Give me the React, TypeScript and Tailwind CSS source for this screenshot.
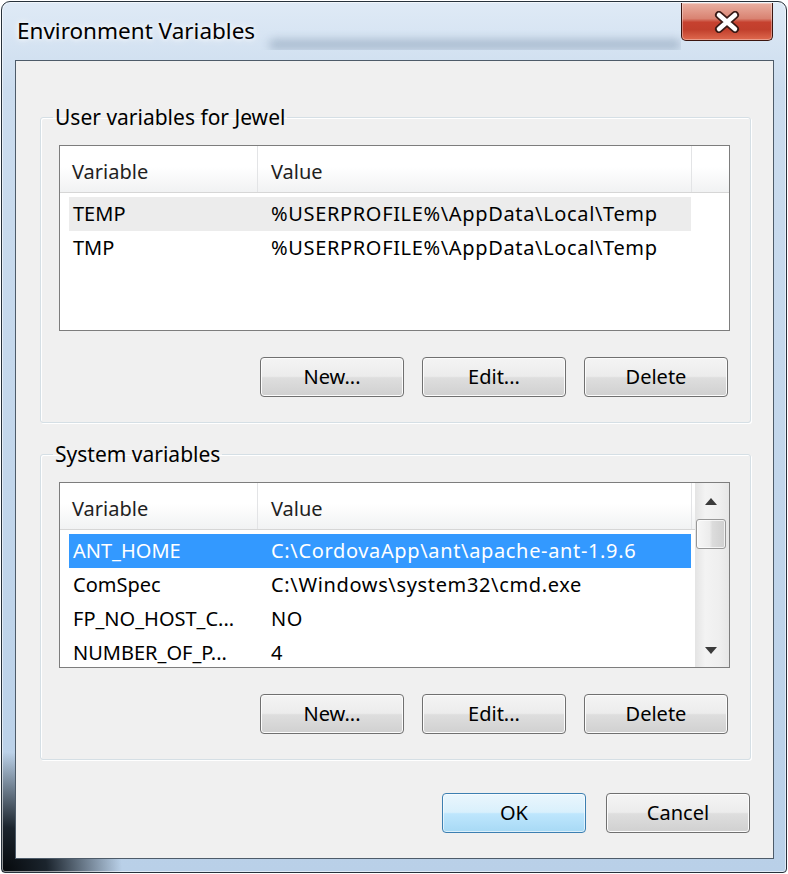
type Row = { name: string; value: string; state?: "hover" | "selected" };

const userVars: Row[] = [
  { name: "TEMP", value: "%USERPROFILE%\\AppData\\Local\\Temp", state: "hover" },
  { name: "TMP", value: "%USERPROFILE%\\AppData\\Local\\Temp" },
];

const systemVars: Row[] = [
  { name: "ANT_HOME", value: "C:\\CordovaApp\\ant\\apache-ant-1.9.6", state: "selected" },
  { name: "ComSpec", value: "C:\\Windows\\system32\\cmd.exe" },
  { name: "FP_NO_HOST_C...", value: "NO" },
  { name: "NUMBER_OF_P...", value: "4" },
];

function Win7Button({ label, primary }: { label: string; primary?: boolean }) {
  return (
    <button
      className={`h-[40px] w-[144px] rounded-[4px] border text-[20px] leading-none text-black ${
        primary
          ? "border-[#3c7fb1] bg-[linear-gradient(to_bottom,#eaf6fd_0%,#d9f0fc_48%,#bee6fd_52%,#a7d9f5_100%)] shadow-[inset_0_0_0_1px_rgba(255,255,255,0.6)]"
          : "border-[#707070] bg-[linear-gradient(to_bottom,#f4f4f4_0%,#ececec_48%,#dedede_52%,#d0d0d0_100%)] shadow-[inset_0_0_0_1px_#fcfcfc]"
      }`}
    >
      {label}
    </button>
  );
}

function ScrollBar() {
  return (
    <div className="flex w-[34px] shrink-0 flex-col bg-[linear-gradient(to_right,#e4e4e4_0%,#f3f3f3_30%,#efefef_70%,#e6e6e6_100%)] pr-[3px]">
      <div className="flex h-[36px] items-center justify-center">
        <svg width="12" height="7" viewBox="0 0 12 7">
          <path d="M0 7 L6 0 L12 7 Z" fill="#3b3b3b" />
        </svg>
      </div>
      <div className="ml-[1px] h-[30px] rounded-[3px] border border-[#979797] bg-[linear-gradient(to_right,#f7f7f7_0%,#ececec_45%,#dcdcdc_55%,#cfcfcf_100%)] shadow-[inset_0_0_0_1px_rgba(255,255,255,0.7)]" />
      <div className="flex-1" />
      <div className="flex h-[34px] items-center justify-center">
        <svg width="12" height="7" viewBox="0 0 12 7">
          <path d="M0 0 L12 0 L6 7 Z" fill="#3b3b3b" />
        </svg>
      </div>
    </div>
  );
}

function ListView({ rows, scroll }: { rows: Row[]; scroll?: boolean }) {
  return (
    <div className="flex h-[186px] overflow-hidden border border-[#7d7d7d] bg-white text-[20px]">
      <div className="flex min-w-0 flex-1 flex-col">
        <div className="flex h-[47px] shrink-0 border-b border-[#d6d6d6] bg-[linear-gradient(to_bottom,#ffffff_0%,#ffffff_45%,#f1f2f3_100%)] text-[#1f1f1f]">
          <div className="flex w-[198px] items-center border-r border-[#e3e4e6] pl-[12px] pt-[5px]">Variable</div>
          <div className="flex w-[434px] items-center border-r border-[#e3e4e6] pl-[13px] pt-[5px]">Value</div>
          <div className="flex-1" />
        </div>
        <div className="flex flex-col pl-[9px] pt-[4px]">
          {rows.map((r) => (
            <div
              key={r.name}
              className={`flex h-[34px] w-[622px] items-center whitespace-nowrap ${
                r.state === "selected"
                  ? "bg-[#3399ff] text-white"
                  : r.state === "hover"
                    ? "bg-[#ececec] text-black"
                    : "text-black"
              }`}
            >
              <span className="w-[188px] pl-[4px]">{r.name}</span>
              <span className="pl-[14px] tracking-[0.65px]">{r.value}</span>
            </div>
          ))}
        </div>
      </div>
      {scroll && <ScrollBar />}
    </div>
  );
}

function GroupBox({ title, rows, scroll }: { title: string; rows: Row[]; scroll?: boolean }) {
  return (
    <fieldset className="ml-[24px] mr-[22px] rounded-[3px] border border-[#d5dfe5] shadow-[inset_1px_1px_0_#ffffff,1px_1px_0_#ffffff]">
      <legend className="ml-[12px] px-[2px] text-[21px] leading-[26px] text-black">{title}</legend>
      <div className="pb-[25px] pl-[18px] pr-[20px] pt-[15px]">
        <ListView rows={rows} scroll={scroll} />
        <div className="mt-[26px] flex justify-end gap-[18px] pr-[2px]">
          <Win7Button label="New..." />
          <Win7Button label="Edit..." />
          <Win7Button label="Delete" />
        </div>
      </div>
    </fieldset>
  );
}

export default function App() {
  return (
    <div className="h-[874px] w-[788px] bg-white p-[1px] font-['Noto_Sans',sans-serif]">
      <div className="flex h-full flex-col overflow-hidden rounded-t-[9px] rounded-b-[4px] border border-[#27313b] bg-[radial-gradient(circle_at_0%_100%,#05080b_0px,#1b242d_45px,rgba(40,55,70,0)_120px),linear-gradient(to_bottom,#dfeaf6_0%,#cbdcee_10%,#b9d0e8_100%)] shadow-[inset_0_0_0_1px_rgba(255,255,255,0.55)]">
        {/* title bar */}
        <div className="flex h-[58px] shrink-0 items-start justify-between">
          <div className="flex min-w-0 flex-1 items-start overflow-hidden">
            <span className="whitespace-nowrap pl-[15px] pt-[15px] text-[22.5px] leading-[28px] text-black [text-shadow:0_0_10px_#ffffff,0_0_4px_#ffffff]">
              Environment Variables
            </span>
            <div className="ml-[14px] mt-[37px] h-[11px] w-[430px] rounded-full bg-[#6f86a0] opacity-40 blur-[4px]" />
          </div>
          <button className="mr-[13px] mt-[1px] flex h-[38px] w-[92px] items-center justify-center rounded-b-[5px] border border-t-0 border-[#3b1510] bg-[linear-gradient(to_bottom,#eab0a2_0%,#d98372_42%,#c6412f_52%,#c13f2c_72%,#df6a4f_100%)] shadow-[inset_0_0_0_1px_rgba(255,255,255,0.35)]">
            <svg width="26" height="22" viewBox="0 0 26 22">
              <path d="M5 4 L21 18 M21 4 L5 18" stroke="#3a1a16" strokeWidth="8" strokeLinecap="round" />
              <path d="M5 4 L21 18 M21 4 L5 18" stroke="#ffffff" strokeWidth="4.5" strokeLinecap="round" />
            </svg>
          </button>
        </div>

        {/* client area */}
        <div className="mb-[13px] ml-[13px] mr-[12px] flex flex-1 flex-col border border-[#4d5b69] bg-[#f0f0f0]">
          <div className="mt-[43px]">
            <GroupBox title="User variables for Jewel" rows={userVars} />
          </div>
          <div className="mt-[18px]">
            <GroupBox title="System variables" rows={systemVars} scroll />
          </div>
          <div className="mr-[23px] mt-[33px] flex justify-end gap-[20px]">
            <Win7Button label="OK" primary />
            <Win7Button label="Cancel" />
          </div>
        </div>
      </div>
    </div>
  );
}
